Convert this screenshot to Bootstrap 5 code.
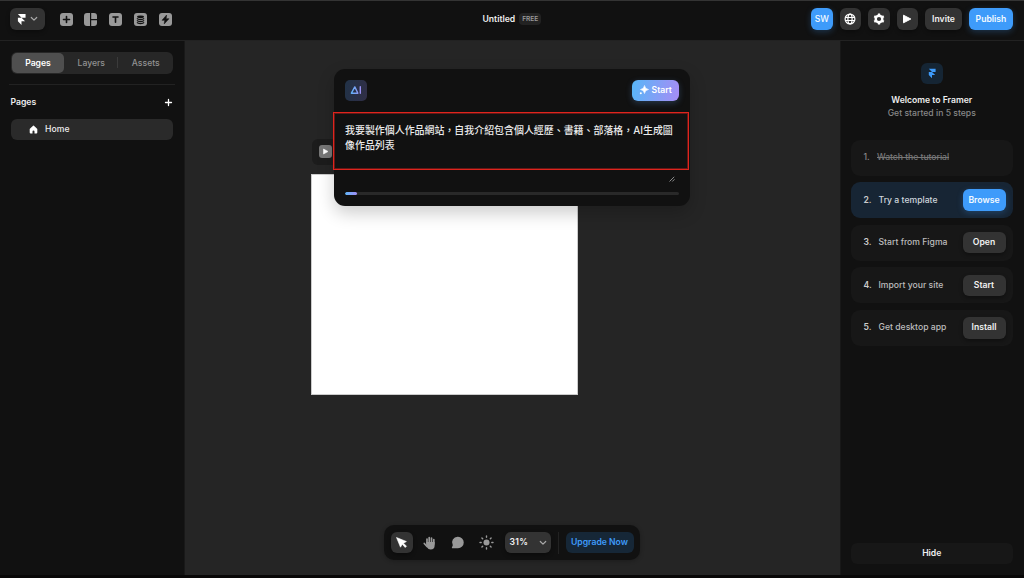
<!DOCTYPE html>
<html lang="zh-Hant" data-bs-theme="dark">
<head>
<meta charset="utf-8">
<meta name="viewport" content="width=device-width, initial-scale=1">
<title>Untitled</title>
<link rel="stylesheet" href="https://cdn.jsdelivr.net/npm/bootstrap@5.3.0/dist/css/bootstrap.min.css">
<style>
body{font-family:Inter,"Noto Sans CJK TC",sans-serif;font-size:8.65px;line-height:11px;font-weight:500;color:#eee;background:#111;height:578px;overflow:hidden}
.shell{height:575px;background:#111;border-top:1px solid #343434}
.edge{height:3px;background:#080707}
.topbar{height:40px;border-bottom:1px solid #222;padding:0 11px 3px 10px;position:relative}
.btn{--bs-btn-font-size:8.65px;--bs-btn-line-height:11px;--bs-btn-font-weight:600;--bs-btn-padding-x:0;--bs-btn-padding-y:0;--bs-btn-border-width:0;--bs-btn-border-radius:6px;height:21.5px;display:inline-flex;align-items:center;justify-content:center;flex:none;white-space:nowrap}
.btn-gray{--bs-btn-bg:#333;--bs-btn-color:#f1f1f1;box-shadow:0 2px 4px #0005}
.btn-blue{--bs-btn-bg:#3e9bfa;--bs-btn-color:#f4faff;box-shadow:0 2px 6px #3e9bfa40}
.sq{width:21.5px}
.doc-title{position:absolute;left:482.5px;top:12px;gap:4px;font-weight:600}
.free{font-size:6.6px;line-height:12px;height:12px;background:#222;color:#999;border-radius:4px;width:22px;text-align:center}
.left-side{width:185px;padding:10.5px 11.5px 0 10.5px;border-right:1px solid #191919}
.seg{height:22px;background:#272727;border-radius:6px;padding:1px;color:#929292}
.seg .tab{width:54.5px;height:20px;line-height:20px;text-align:center;padding-left:2px}
.seg .tab.on{background:#4f4f4f;color:#fff;border-radius:5px;font-weight:600;width:53px;padding-left:1px}
.rule{height:1px;background:#222;margin:10.5px -2px 0}
.home-row{height:21.5px;background:#2a2a2a;border-radius:6px;padding-left:18px;gap:7.5px;margin-top:11px}
.stage{background:#252525;position:relative;overflow:hidden}
.right-side{width:184.5px;padding:21.5px 11.5px 11px 10.5px;border-left:1px solid #181818}
.brand{width:21.5px;height:21.5px;border-radius:6px;background:#152534}
.step{height:36px;border-radius:9px;background:#171717;padding:0 7px 0 12.5px;margin-bottom:6.6px;color:#bdbdbd}
.step .num{width:15px;font-weight:600;color:#ccc}
.step .btn{width:43px}
.step.active{background:#172534;color:#cfd6dd}
.step.done{color:#777}
.step.done s{letter-spacing:-.04px}
.step.done .num{color:#888;width:13.5px;font-weight:500}
.hide-btn{height:21.5px;background:#171717;border-radius:6px;font-weight:600}
.page-canvas{position:absolute;left:126px;top:133px;width:267px;height:221px;background:#fff;border:1px solid #ccc}
.play-tag{position:absolute;left:127px;top:97.5px;width:60px;height:26px;background:#1c1c1c;border-radius:6px;padding:6.5px}
.ai-card{--bs-card-bg:#111;position:absolute;left:149px;top:28px;width:355.500px;height:137px;border:0;border-radius:11px;box-shadow:0 7px 17px #0003}
.ai-head{padding:10.5px 10.5px 0 11px;height:43px}
.ai-logo{width:21.5px;height:21.5px;border-radius:5px;background:linear-gradient(100deg,#213247,#302e46)}
.start-btn{width:47.5px;color:#fff;gap:3px;background:linear-gradient(100deg,#57b6f7,#a78cf5);box-shadow:0 2px 6px #68a8f440}
.prompt{height:58px;border:1px solid #df241d;box-shadow:inset 0 0 0 1px #df241d66;margin:0 0 0 -1px;padding:10px 10px 0 11px;font-size:9.95px;line-height:15px;font-weight:500;color:#ebebeb;white-space:nowrap;width:356px}
.bar{--bs-progress-height:3px;--bs-progress-bg:#292929;--bs-progress-border-radius:2px;margin:0 10.5px 0 11px}
.bar .progress-bar{width:12px;border-radius:2px;background:linear-gradient(90deg,#5fb8fa,#a28df5)}
.dock{position:absolute;left:199px;top:484px;width:256px;height:35px;background:#111;border-radius:10px;padding:0 6.5px 0 7px;box-shadow:0 1px 4px #0004}
.dock .split{width:1px;height:22px;background:#222;margin:0 7px}
.upgrade{background:#162737;color:#3e9bfa;width:68px}
svg{display:block;flex:none}
</style>
</head>
<body>
<svg width="0" height="0" class="position-absolute">
<defs>
<linearGradient id="ag" gradientUnits="userSpaceOnUse" x1="0" y1="0" x2="12" y2="0"><stop stop-color="#58b5f8"/><stop offset="1" stop-color="#a58bf3"/></linearGradient>
<symbol id="framer" viewBox="0 0 10 12"><path d="M1 0h8.5v4H5zM1 4h4l4 4H1zM1 8h4v4z"/></symbol>
<symbol id="chev" viewBox="0 0 8 6"><path d="M1.300 1.500l2.700 2.600 2.700-2.600" fill="none" stroke="currentColor" stroke-width="1.200" stroke-linecap="round" stroke-linejoin="round"/></symbol>
</defs>
</svg>
<div class="shell d-flex flex-column">
<nav class="topbar d-flex align-items-center">
  <button class="btn btn-gray gap-1" style="width:34.5px"><svg width="9" height="11" fill="#fff"><use href="#framer"/></svg><svg width="8" height="6" color="#aaa"><use href="#chev"/></svg></button>
  <div class="d-flex align-items-center" style="gap:11.9px;margin-left:15px">
    <svg width="13" height="13" viewBox="0 0 13 13"><rect width="13" height="13" rx="3" fill="#999"/><path d="M6.5 3.5v6M3.5 6.5h6" stroke="#111" stroke-width="1.6" stroke-linecap="round"/></svg>
    <svg width="13" height="13" viewBox="0 0 13 13" fill="#999"><path d="M3 0h3v13H3a3 3 0 0 1-3-3V3a3 3 0 0 1 3-3zM7.2 0H10a3 3 0 0 1 3 3v3H7.2zM7.2 7.2H13V10a3 3 0 0 1-3 3H7.2z"/></svg>
    <svg width="13" height="13" viewBox="0 0 13 13"><rect width="13" height="13" rx="3" fill="#999"/><path d="M4 4h5M6.5 4v5.3" stroke="#111" stroke-width="1.6" stroke-linecap="round"/></svg>
    <svg width="13" height="13" viewBox="0 0 13 13"><rect width="13" height="13" rx="3" fill="#999"/><ellipse cx="6.5" cy="3.8" rx="3.5" ry="1.4" fill="#111"/><path d="M3 5.4c1 1.6 6 1.6 7 0M3 7.4c1 1.6 6 1.6 7 0M3 9.4c1 1.6 6 1.6 7 0" fill="none" stroke="#111" stroke-width="1.2"/></svg>
    <svg width="13" height="13" viewBox="0 0 13 13"><rect width="13" height="13" rx="3" fill="#999"/><path d="M7.6 2L3 7.3h2.7L5.2 11 10 5.7H7.2z" fill="#111" stroke="#111" stroke-width=".5" stroke-linejoin="round"/></svg>
  </div>
  <div class="doc-title d-flex align-items-center"><span>Untitled</span><span class="free">FREE</span></div>
  <div class="d-flex ms-auto" style="gap:7px">
    <button class="btn btn-blue sq fw-medium">SW</button>
    <button class="btn btn-gray sq"><svg width="12" height="12" viewBox="0 0 12 12" fill="none" stroke="#fff" stroke-width="1.2"><circle cx="6" cy="6" r="4.9"/><ellipse cx="6" cy="6" rx="2.1" ry="4.9"/><path d="M1.4 4.5h9.2M1.4 7.5h9.2"/></svg></button>
    <button class="btn btn-gray sq"><svg width="12" height="12" viewBox="0 0 12 12"><circle cx="6" cy="6" r="3.3" fill="none" stroke="#fff" stroke-width="2.4"/><path d="M6 .5v2M6 9.5v2M1.25 3.25l1.7 1M9.05 7.75l1.7 1M1.25 8.75l1.7-1M9.05 4.25l1.7-1" stroke="#fff" stroke-width="2.2"/></svg></button>
    <button class="btn btn-gray sq"><svg width="10" height="10" viewBox="0 0 10 10"><path d="M1.5 1.2v7.6L8.8 5z" fill="#fff" stroke="#fff" stroke-linejoin="round"/></svg></button>
    <button class="btn btn-gray" style="width:37px">Invite</button>
    <button class="btn btn-blue" style="width:44px">Publish</button>
  </div>
</nav>
<main class="d-flex flex-grow-1" style="min-height:0">
  <aside class="left-side flex-shrink-0">
    <div class="seg d-flex align-items-center"><div class="tab on">Pages</div><div class="tab">Layers</div><div style="width:1px;height:11px;background:#3b3b3b"></div><div class="tab">Assets</div></div>
    <div class="rule"></div>
    <div class="d-flex justify-content-between align-items-center fw-semibold" style="margin-top:11.5px"><span>Pages</span><svg width="9" height="9" viewBox="0 0 9 9"><path d="M4.5 1.5v6M1.5 4.5h6" stroke="#fff" stroke-width="1.3" stroke-linecap="round"/></svg></div>
    <div class="home-row d-flex align-items-center"><svg width="9" height="9" viewBox="0 0 9 9"><path d="M4.5.5Q5 .5 8.3 4V7.5Q8.3 8.5 7.3 8.5H5.5V6.5a1 1 0 0 0-2 0V8.5H1.7Q.7 8.5.7 7.5V4Q4 .5 4.5.5z" fill="#fff"/></svg><span style="letter-spacing:.1px">Home</span></div>
  </aside>
  <section class="stage flex-grow-1">
    <div class="play-tag"><svg width="13" height="13" viewBox="0 0 13 13"><rect width="13" height="13" rx="3" fill="#777"/><path d="M4.5 4v5l4.5-2.5z" fill="#fff" stroke="#fff" stroke-width=".6"/></svg></div>
    <div class="page-canvas"></div>
    <div class="card ai-card">
      <div class="ai-head d-flex justify-content-between align-items-start">
        <div class="ai-logo d-flex align-items-center justify-content-center"><svg width="12" height="10" viewBox="0 0 12 10" fill="none" stroke="url(#ag)" stroke-width="1.4" stroke-linejoin="round" stroke-linecap="round"><path d="M4.8 1.9L7.9 8.2H1.4zM10.3 1.7L10.31 8.2"/></svg></div>
        <button class="btn start-btn"><svg width="10" height="10" viewBox="0 0 10 10" fill="#fff"><path d="M5.5.5Q6 4 9.5 4.5 6 5 5.5 8.5 5 5 1.5 4.5 5 4 5.5.5z" stroke="#fff" stroke-width=".6"/><circle cx="1.8" cy="8.3" r="1"/></svg>Start</button>
      </div>
      <div class="prompt">我要製作個人作品網站，自我介紹包含個人經歷、書籍、部落格，AI生成圖<br>像作品列表</div>
      <div class="d-flex justify-content-end" style="height:22px;padding:6px 15px 0 0"><svg width="6" height="6" viewBox="0 0 6 6"><path d="M.5 5.5l4.7-4.7M3.3 5.5L5.5 3.3" stroke="#999" stroke-width=".9"/></svg></div>
      <div class="progress bar"><div class="progress-bar"></div></div>
    </div>
    <div class="dock d-flex align-items-center">
      <button class="btn btn-gray sq"><svg width="13" height="13" viewBox="0 0 13 13"><path d="M1.5 1.5l4 9.7 1.7-3 3 3.3 1.3-1.3-3-3 2.9-1.7z" fill="#fff" stroke="#fff" stroke-width=".6" stroke-linejoin="round"/></svg></button>
      <svg style="margin-left:10.5px" width="13" height="14" viewBox="0 0 13 14"><g stroke="#999" stroke-width="1.7" stroke-linecap="round" fill="none"><path d="M4 8V3M6.2 7V1.5M8.5 7V2M10.8 8V3.5M1.3 7.5L4 10.5"/></g><path d="M3.2 6h8.45v3.5a4 4 0 0 1-4 4q-2.5 0-3.5-2z" fill="#999"/></svg>
      <svg style="margin-left:15px" width="13" height="13" viewBox="0 0 13 13"><path d="M7 .7a5.7 5.7 0 1 1 0 11.5H1.2Q.5 12 1 11.3L1.8 9.3A5.7 5.7 0 0 1 7 .7z" fill="#999"/></svg>
      <svg style="margin-left:14.5px" width="15" height="15" viewBox="0 0 15 15"><circle cx="7.5" cy="7.5" r="3" fill="#999"/><path d="M7.5 1v1.2M7.5 12.8V14M1 7.5h1.2M12.8 7.5H14M2.9 2.9l.8.8M11.3 11.3l.8.8M2.9 12.1l.8-.8M11.3 3.7l.8-.8" stroke="#999" stroke-width="1.4" stroke-linecap="round"/></svg>
      <button class="btn btn-gray" style="width:46px;margin-left:11px;justify-content:space-between;padding:0 4px 0 5px"><span style="letter-spacing:.3px">31%</span><svg width="8" height="6" color="#aaa"><use href="#chev"/></svg></button>
      <div class="split"></div>
      <button class="btn upgrade">Upgrade Now</button>
    </div>
  </section>
  <aside class="right-side flex-shrink-0 d-flex flex-column">
    <div class="brand mx-auto d-flex align-items-center justify-content-center"><svg width="8" height="11" fill="#3e9bfa"><use href="#framer"/></svg></div>
    <div class="text-center fw-semibold" style="margin-top:10px;line-height:13px">Welcome to Framer</div>
    <div class="text-center" style="color:#888;line-height:13px;margin-bottom:19.5px">Get started in 5 steps</div>
    <div class="step done d-flex align-items-center"><span class="num">1.</span><s>Watch the tutorial</s></div>
    <div class="step active d-flex align-items-center"><span class="num">2.</span><span>Try a template</span><button class="btn btn-blue ms-auto">Browse</button></div>
    <div class="step d-flex align-items-center"><span class="num">3.</span><span>Start from Figma</span><button class="btn btn-gray ms-auto">Open</button></div>
    <div class="step d-flex align-items-center"><span class="num">4.</span><span>Import your site</span><button class="btn btn-gray ms-auto">Start</button></div>
    <div class="step d-flex align-items-center"><span class="num">5.</span><span>Get desktop app</span><button class="btn btn-gray ms-auto">Install</button></div>
    <div class="hide-btn d-flex align-items-center justify-content-center mt-auto">Hide</div>
  </aside>
</main>
</div>
<div class="edge"></div>
<script src="https://cdn.jsdelivr.net/npm/bootstrap@5.3.0/dist/js/bootstrap.bundle.min.js"></script>
</body>
</html>
